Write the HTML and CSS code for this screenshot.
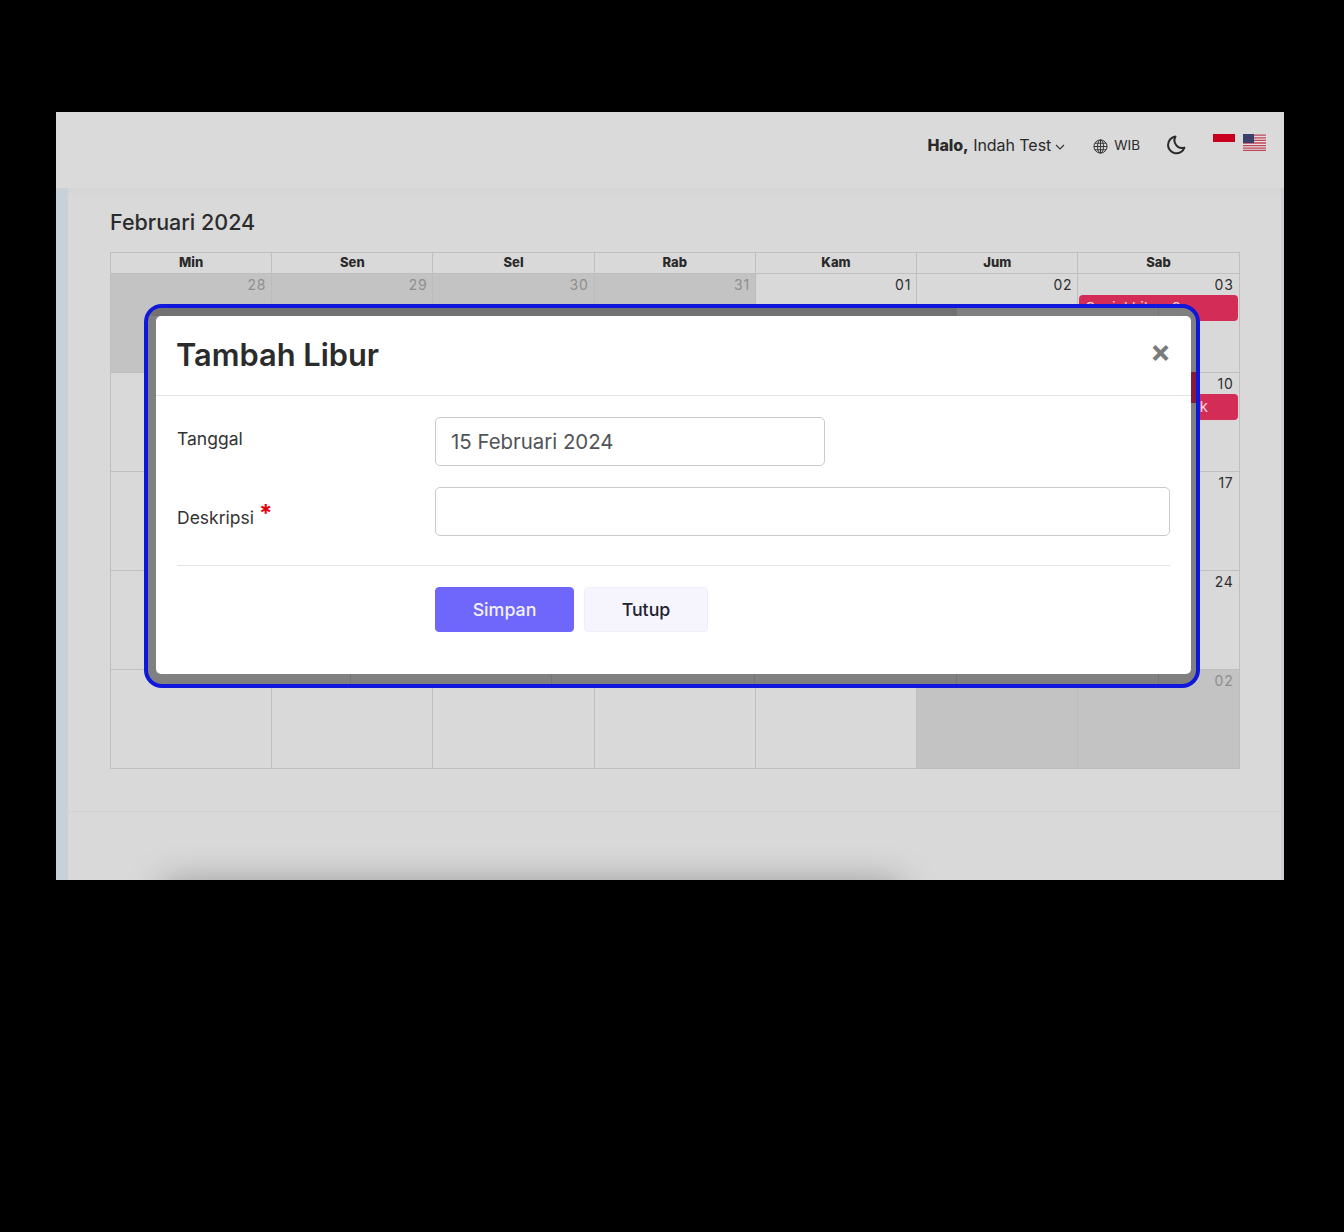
FILE: index.html
```html
<!DOCTYPE html>
<html lang="id">
<head>
<meta charset="utf-8">
<title>Tambah Libur</title>
<link rel="stylesheet" href="styles.css">
</head>
<body>
<div class="screen">
  <header class="topbar">
    <div class="user">
      <span><b>Halo,</b> Indah Test</span>
      <svg class="chev" width="10" height="6" viewBox="0 0 10 6"><path d="M1 1l4 4 4-4" fill="none" stroke="#333" stroke-width="1.1"/></svg>
    </div>
    <div class="tz">
      <svg width="15" height="15" viewBox="0 0 16 16" fill="none" stroke="#2e2e2e" stroke-width="1"><circle cx="8" cy="8" r="7"/><ellipse cx="8" cy="8" rx="3.2" ry="7"/><path d="M8 1v14M1 8h14M2 4.5h12M2 11.5h12"/></svg>
      <span>WIB</span>
    </div>
    <svg class="moon" width="20" height="20" viewBox="0 0 20 20"><path d="M9.5 1.6A8.4 8.4 0 1 0 18.4 12.6 7.6 7.6 0 0 1 9.5 1.6Z" fill="none" stroke="#2a2a2a" stroke-width="2" stroke-linejoin="round"/></svg>
    <div class="flags">
      <svg width="22" height="17" viewBox="0 0 22 17"><rect width="22" height="8" fill="#c8001e"/></svg>
      <svg width="23" height="17" viewBox="0 0 23 17"><rect width="23" height="17" fill="#e3dfe0"/><path d="M0 1.2h23M0 3.8h23M0 6.4h23M0 9h23M0 11.6h23M0 14.2h23M0 16.4h23" stroke="#c0475a" stroke-width="1.3"/><rect width="11" height="9" fill="#3d3f6b"/></svg>
    </div>
  </header>
  <div class="body-row">
    <aside class="rail"></aside>
    <main class="content">
      <div class="pane">
        <h2 class="month">Februari 2024</h2>
        <div class="cal">
          <div class="dow">Min</div><div class="dow">Sen</div><div class="dow">Sel</div><div class="dow">Rab</div><div class="dow">Kam</div><div class="dow">Jum</div><div class="dow">Sab</div>

          <div class="day off">28</div><div class="day off">29</div><div class="day off">30</div><div class="day off">31</div><div class="day">01</div><div class="day">02</div><div class="day">03<div class="event">Sosial Libur 2</div></div>

          <div class="day">04</div><div class="day">05</div><div class="day">06</div><div class="day">07</div><div class="day">08</div><div class="day">09</div><div class="day">10<div class="event">Tahun Baru Imlek</div></div>

          <div class="day">11</div><div class="day">12</div><div class="day">13</div><div class="day">14</div><div class="day">15</div><div class="day">16</div><div class="day">17</div>

          <div class="day">18</div><div class="day">19</div><div class="day">20</div><div class="day">21</div><div class="day">22</div><div class="day">23</div><div class="day">24</div>

          <div class="day">25</div><div class="day">26</div><div class="day">27</div><div class="day">28</div><div class="day">29</div><div class="day off">01</div><div class="day off">02</div>
        </div>
      </div>
      <footer class="foot"></footer>
    </main>
    <div class="edge"></div>
  </div>
  <div class="under-shadow"></div>

  <div class="focus-frame">
    <span class="ring-dark"></span>
    <span class="ring-red"></span>
    <section class="modal">
      <div class="modal-head">
        <h1>Tambah Libur</h1>
        <button class="close" type="button">×</button>
      </div>
      <form class="modal-body">
        <div class="row">
          <label class="lbl">Tanggal</label>
          <input class="field short" type="text" value="15 Februari 2024">
        </div>
        <div class="row">
          <label class="lbl lbl-req">Deskripsi <span class="req">*</span></label>
          <input class="field" type="text">
        </div>
        <hr class="sep">
        <div class="actions">
          <button class="btn primary" type="button">Simpan</button>
          <button class="btn ghost" type="button">Tutup</button>
        </div>
      </form>
    </section>
  </div>
</div>
</body>
</html>
```
FILE: styles.css
```css
* { box-sizing: border-box; }
html, body { margin: 0; background: #000; }
body { height: 1232px; padding: 112px 60px 352px 56px; overflow: hidden; font-family: Inter, "Liberation Sans", sans-serif; }

.screen { position: relative; width: 1228px; height: 768px; overflow: hidden; background: #d9d9d9; display: flex; flex-direction: column; color: #2a2a2a; }

.topbar { height: 76px; flex: none; background: #dadada; display: flex; align-items: flex-start; justify-content: flex-end; padding: 22px 18px 0 0; }
.user { display: flex; align-items: center; font-size: 16px; line-height: 22px; letter-spacing: -0.05px; }
.user b { font-weight: 800; }
.chev { margin: 3px 0 0 4px; }
.tz { display: flex; align-items: center; gap: 6px; margin: 2px 0 0 28px; font-size: 13.5px; line-height: 18px; }
.tz svg { margin-top: 3px; }
.moon { margin: 1px 0 0 26px; }
.flags { display: flex; gap: 8px; margin-left: 27px; }

.body-row { flex: 1; display: flex; min-height: 0; }
.rail { width: 12px; flex: none; background: #c8d0d8; }
.edge { width: 3px; flex: none; background: #ccd0d6; }
.content { flex: 1; display: flex; flex-direction: column; background: linear-gradient(#d4d5d6, #d9d9d9 10px); }
.pane { padding: 22px 41.4px 42px 42px; }
.month { margin: 0 0 18px; font-size: 21.5px; line-height: 24px; font-weight: 500; color: #2c2c2c; }

.cal { display: grid; grid-template-columns: repeat(7, 1fr); grid-template-rows: 21px repeat(5, 99px); border-top: 1px solid #bfbfbf; border-left: 1px solid #bfbfbf; }
.dow { border-right: 1px solid #bfbfbf; border-bottom: 1px solid #bfbfbf; text-align: center; font-size: 13px; line-height: 18px; font-weight: 800; color: #2a2a2a; }
.day { border-right: 1px solid #bfbfbf; border-bottom: 1px solid #bfbfbf; text-align: right; font-size: 14px; line-height: 20px; letter-spacing: 0.8px; padding: 1px 5px 0 0; color: #2e2e2e; position: relative; }
.day.off { background: #c3c3c3; color: #8e8e8e; border-color: #bcbcbc; }
.event { position: absolute; left: 1px; right: 1px; top: 21px; height: 26px; border-radius: 4px; background: #d32d57; color: #f6d9e0; padding-left: 6px; text-align: left; font-size: 15px; line-height: 26px; letter-spacing: 0; white-space: nowrap; }

.foot { flex: 1; border-top: 1px solid #d2d3d4; }
.under-shadow { position: absolute; left: 116px; top: 780px; width: 720px; height: 40px; box-shadow: 0 0 36px 8px rgba(0, 0, 0, .34); background: #888; }

.focus-frame { position: absolute; left: 88px; top: 192px; width: 1056px; height: 384px; border: 4px solid #1017dd; border-radius: 18px; padding: 8px 5px 10px 8px; overflow: hidden;
  background: linear-gradient(#747474 0 0) 202px 0 / 1px 100% no-repeat, linear-gradient(#747474 0 0) 403px 0 / 1px 100% no-repeat, linear-gradient(#747474 0 0) 606px 0 / 1px 100% no-repeat, linear-gradient(#747474 0 0) 808px 0 / 1px 100% no-repeat, linear-gradient(#747474 0 0) 1010px 0 / 1px 100% no-repeat, #808080; }
.ring-dark { position: absolute; left: 0; top: 0; width: 808px; height: 8px; background: #727272; }
.ring-red { position: absolute; right: 0; top: 64px; width: 5px; height: 31px; background: #861c38; }

.modal { position: relative; height: 358px; background: #fff; border-radius: 5px; }
.modal-head { height: 80px; border-bottom: 1px solid #e4e4e4; display: flex; align-items: center; justify-content: space-between; padding: 0 21px; }
.modal-head h1 { margin: -2px 0 0 -1px; font-size: 30.8px; line-height: 40px; font-weight: 600; color: #2b2b2b; }
.close { border: 0; padding: 0; background: none; font: 700 31px/30px Inter, "Liberation Sans", sans-serif; color: #7b7b7b; margin: -10px -1px 0 0; }

.modal-body { padding: 21px 21px 0; }
.row { display: grid; grid-template-columns: 258px 1fr; margin-bottom: 21px; align-items: start; }
.lbl { font-size: 17.5px; line-height: 24px; padding-top: 10px; color: #333; }
.lbl-req { padding-top: 19px; }
.req { font-size: 24px; line-height: 0; font-weight: 700; color: #e5000f; position: relative; top: -2px; }
.field { height: 49px; width: 100%; border: 1px solid #c8cacd; border-radius: 5px; background: #fff; padding: 0 15px; font: 400 20.4px Inter, "Liberation Sans", sans-serif; color: #505458; outline: 0; }
.field.short { width: 390px; }
.sep { margin: 29px 0 21px; border: 0; border-top: 1px solid #e4e4e4; }
.actions { display: flex; gap: 10px; padding-left: 258px; }
.btn { height: 45px; border-radius: 4px; font: 500 17.8px Inter, "Liberation Sans", sans-serif; padding: 0; }
.primary { width: 139px; background: #6f66fb; border: 1px solid #6f66fb; color: #f2f1ff; }
.ghost { width: 124px; background: #f6f5fe; border: 1px solid #efeefb; color: #23232f; }
```
